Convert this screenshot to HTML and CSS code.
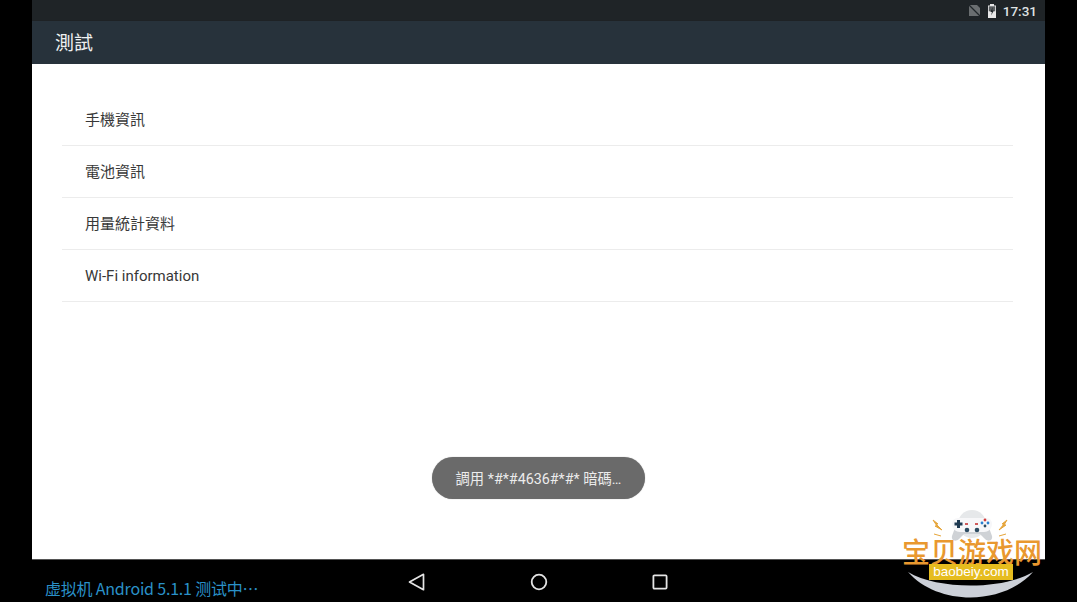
FILE: index.html
```html
<!DOCTYPE html>
<html lang="zh-Hant">
<head>
<meta charset="utf-8">
<title>測試</title>
<link rel="stylesheet" href="styles.css">
</head>
<body>
<div class="screen">
  <div class="status">
    <svg class="ic" width="13" height="13" viewBox="0 0 13 13"><path d="M3 1h6l3 3v8H1V1z" fill="#6a6e70"/><path d="M1 1l11 11" stroke="#20262a" stroke-width="1.2"/></svg>
    <svg class="ic" width="10" height="14" viewBox="0 0 10 14"><path d="M3 0h4v1.500h2V14H1V1.500h2z" fill="#e8e8e8"/><path d="M1.800 2.300h6.400v5H1.800z" fill="#5a5e60"/><path d="M5.800 3L3.400 8h1.500l-.7 3.500L6.800 6.500H5.200z" fill="#20262a"/></svg>
    <span class="clock">17:31</span>
  </div>
  <header class="toolbar">測試</header>
  <main class="content">
    <ul class="list">
      <li class="row">手機資訊</li>
      <li class="row">電池資訊</li>
      <li class="row">用量統計資料</li>
      <li class="row">Wi-Fi information</li>
    </ul>
    <div class="toast">調用 *#*#4636#*#* 暗碼…</div>
  </main>
</div>
<nav class="nav">
  <div class="caption">虚拟机 Android 5.1.1 测试中…</div>
  <svg class="navic back" width="18" height="18" viewBox="0 0 18 18"><path d="M15.500 1.300V16.700L1.500 9z" fill="none" stroke="#e4e4e4" stroke-width="1.700" stroke-linejoin="round"/></svg>
  <svg class="navic home" width="18" height="18" viewBox="0 0 18 18"><circle cx="9" cy="9" r="7.300" fill="none" stroke="#e4e4e4" stroke-width="1.800"/></svg>
  <svg class="navic recent" width="16" height="16" viewBox="0 0 16 16"><rect x="1.400" y="1.400" width="13.200" height="13.200" rx="1" fill="none" stroke="#e4e4e4" stroke-width="1.800"/></svg>
</nav>
<div class="mark">
  <svg class="pad" width="104" height="36" viewBox="0 0 104 36">
    <circle cx="54" cy="16" r="14" fill="#e6e8ea"/>
    <path d="M38 17h32l4 11c1 5-4 6-7 3l-5-5H46l-5 5c-3 3-8 2-7-3z" fill="#cfd2d6"/>
    <path d="M40 10h28c4 0 6 3 6 6 0 5-4 8-8 8H42c-4 0-8-3-8-8 0-3 2-6 6-6z" fill="#f7f7f9"/>
    <path d="M39 12h3v2.500h2.500v3H42V20h-3v-2.500h-2.500v-3H39z" fill="#1f3a52"/>
    <circle cx="49" cy="22" r="2.300" fill="#2c4a60"/><circle cx="59" cy="22" r="2.300" fill="#2c4a60"/>
    <rect x="47" y="15" width="3" height="2" fill="#d05a5a"/><rect x="57" y="15" width="3" height="2" fill="#d05a5a"/>
    <circle cx="67" cy="12" r="1.400" fill="#d23c3c"/><circle cx="70" cy="15" r="1.400" fill="#2a7fd0"/><circle cx="64" cy="15" r="1.400" fill="#2a7fd0"/><circle cx="67" cy="18" r="1.400" fill="#2c4a60"/>
    <path d="M15 12l5 4-2 0 6 6-7-4 2 0zM16 26l7 2M89 12l-5 4 2 0-5 6 7-5-2 0zM88 26l-7 2" fill="#e6a53a" stroke="#e6a53a" stroke-width="1"/>
  </svg>
  <div class="mark-name">宝贝游戏网</div>
  <svg class="smile" width="125" height="30" viewBox="0 0 125 30"><path d="M0 2C30 20 95 20 125 2C95 36 30 36 0 2z" fill="#ccd0d8"/></svg>
  <div class="mark-url">baobeiy.com</div>
</div>
</body>
</html>
```
FILE: styles.css
```css
html, body {
  margin: 0;
  height: 100%;
  background: #000;
  overflow: hidden;
}
body {
  font-family: Roboto, "Noto Sans CJK TC", sans-serif;
  position: relative;
}
.screen {
  margin: 0 32px;
  height: 560px;
  display: flex;
  flex-direction: column;
}
.status {
  height: 21px;
  flex: none;
  background: #1f2427;
  display: flex;
  align-items: center;
  justify-content: flex-end;
  gap: 6px;
  padding-right: 8px;
}
.clock {
  color: #dfe2e3;
  font-size: 13.500px;
  font-weight: 500;
}
.toolbar {
  height: 43px;
  flex: none;
  background: #27323b;
  color: #eef0f1;
  font-size: 19px;
  line-height: 45px;
  padding-left: 23px;
  box-shadow: 0 1px 2px rgba(0,0,0,.45);
  position: relative;
}
.content {
  flex: 1;
  background: #fff;
  position: relative;
  padding: 30px 32px 0 30px;
  border-bottom: 1px solid #555;
}
.list {
  list-style: none;
  margin: 0;
  padding: 0;
}
.row {
  height: 50px;
  line-height: 51px;
  padding: 1px 0 0 23px;
  color: #383838;
  font-size: 15px;
  border-bottom: 1px solid #ececec;
}
.toast {
  position: absolute;
  left: 400px;
  top: 393px;
  width: 213px;
  height: 42px;
  line-height: 44px;
  text-align: center;
  border-radius: 21px;
  background: #6a6a6a;
  color: #ececec;
  font-size: 14.300px;
  box-shadow: 0 0 1px #999;
}
.nav {
  height: 42px;
  background: #000;
  position: relative;
}
.caption {
  position: absolute;
  left: 45px;
  top: 17px;
  color: #2a91c8;
  font-family: "Noto Sans CJK SC", "Liberation Sans", sans-serif;
  font-size: 16px;
  line-height: 22px;
  letter-spacing: -.2px;
  white-space: nowrap;
}
.navic { position: absolute; top: 13px; }
.back { left: 408px; }
.home { left: 530px; }
.recent { left: 652px; top: 14px; }
.mark {
  position: absolute;
  left: 880px;
  top: 505px;
  width: 197px;
  height: 97px;
}
.pad { position: absolute; left: 38px; top: 3px; }
.mark-name {
  position: absolute;
  left: 22px;
  top: 33px;
  color: #e9982f;
  font-family: "Noto Sans CJK SC", sans-serif;
  font-size: 28px;
  font-weight: 500;
  line-height: 26px;
  white-space: nowrap;
}
.mark-url {
  position: absolute;
  left: 49px;
  top: 59px;
  width: 84px;
  height: 16px;
  background: #e6bc1e;
  color: #fff;
  font-family: "Liberation Sans", sans-serif;
  font-size: 13.500px;
  line-height: 16px;
  text-align: center;
}
.smile { position: absolute; left: 28px; top: 65px; }
```
